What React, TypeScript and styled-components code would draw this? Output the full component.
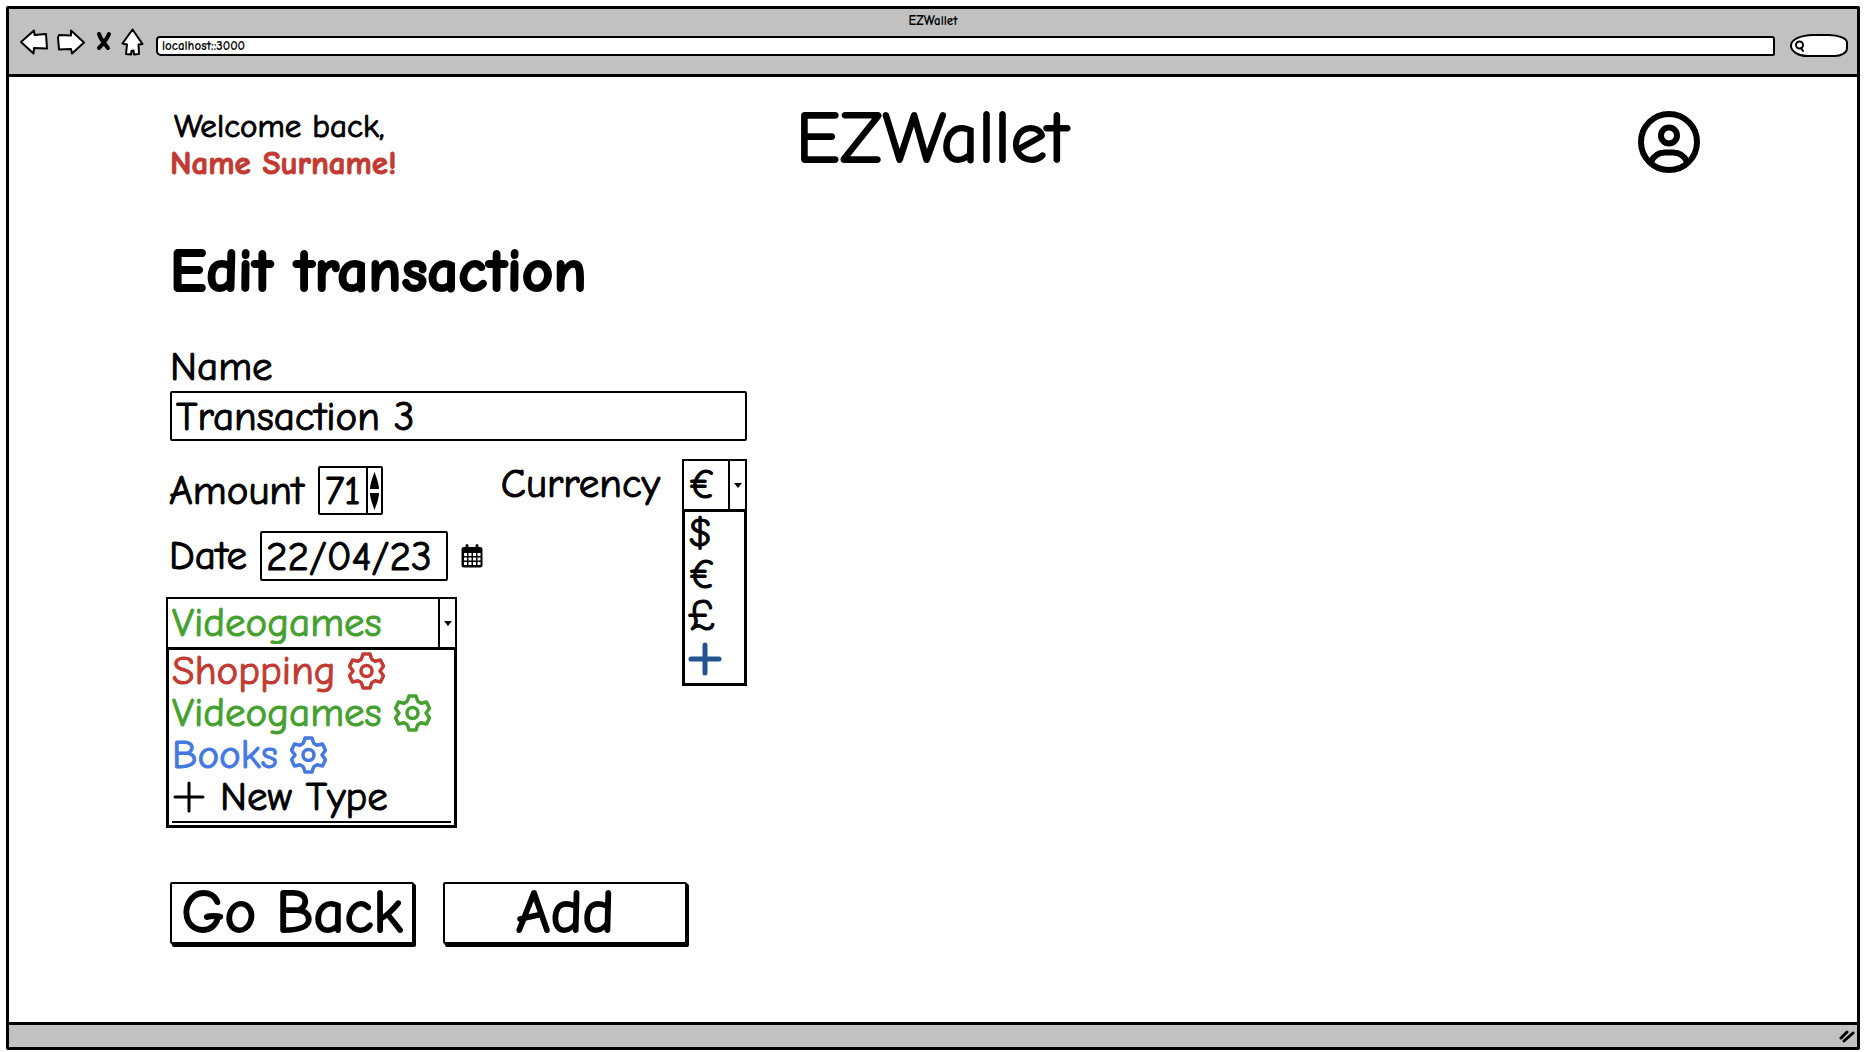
import React, { useState } from "react";
import styled, { createGlobalStyle, css } from "styled-components";

const INK = "#000";
const CHROME = "#c1c1c1";
const RED = "#c23b32";
const GREEN = "#45a030";
const BLUE = "#4479e0";
const NAVY = "#23528f";

const GlobalStyle = createGlobalStyle`
  *, *::before, *::after { box-sizing: border-box; }
  body {
    margin: 0;
    background: #fff;
    color: ${INK};
    font-family: "Comic Neue", Lato, "Open Sans", sans-serif;
  }
  button, input, select { font: inherit; color: inherit; }
`;

const bareControl = css`
  margin: 0;
  padding: 0;
  border: 0;
  background: transparent;
  appearance: none;
  outline: none;
`;

const bodyText = css`
  font-size: 41px;
  line-height: 42px;
  -webkit-text-stroke: 1px currentColor;
`;

const Page = styled.div`
  display: flex;
  min-height: 100vh;
  padding: 6px 4px 2px 6px;
`;

const BrowserFrame = styled.div`
  flex: 1;
  display: flex;
  flex-direction: column;
  border: 3px solid ${INK};
  border-radius: 2px;
`;

const Toolbar = styled.header`
  background: ${CHROME};
  border-bottom: 3px solid ${INK};
  padding-bottom: 18px;
`;

const WindowTitle = styled.div`
  text-align: center;
  font-size: 13px;
  line-height: 23px;
  font-weight: 700;
`;

const NavRow = styled.div`
  display: flex;
  align-items: center;
  height: 24px;
  padding: 0 9px 0 11px;
`;

const NavButtons = styled.nav`
  display: flex;
  align-items: center;
  gap: 9px;
  margin: -4px 12px 0 0;
`;

const IconButton = styled.button`
  ${bareControl}
  display: flex;
  cursor: pointer;
`;

const Address = styled.input`
  ${bareControl}
  flex: 1;
  min-width: 0;
  height: 20px;
  margin-top: 3px;
  padding: 0 4px;
  border: 2px solid ${INK};
  border-radius: 4px 3px 2px 5px;
  background: #fff;
  font-size: 13px;
  font-weight: 700;
`;

const SearchBox = styled.label`
  display: flex;
  align-items: center;
  width: 58px;
  height: 23px;
  margin: 3px 0 0 15px;
  padding-left: 2px;
  border: 2px solid ${INK};
  border-radius: 24px 20px 14px 18px / 12px 9px 9px 12px;
  background: #fff;
`;

const SearchInput = styled.input`
  ${bareControl}
  flex: 1;
  min-width: 0;
  font-size: 13px;
`;

const Main = styled.main`
  flex: 1;
  padding: 31px 157px 70px 161px;
`;

const PageHeader = styled.div`
  display: grid;
  grid-template-columns: 1fr auto 1fr;
  align-items: start;
`;

const Greeting = styled.p`
  margin: 0;
  font-size: 33px;
  line-height: 37px;
  -webkit-text-stroke: 1px currentColor;
`;

const Welcome = styled.span`
  display: block;
  padding-left: 4px;
`;

const UserName = styled.strong`
  display: block;
  color: ${RED};
`;

const Brand = styled.div`
  padding-right: 6px;
  font-size: 73px;
  line-height: 60px;
  -webkit-text-stroke: 2px currentColor;
`;

const ProfileButton = styled(IconButton)`
  justify-self: end;
  margin-top: 3px;
`;

const Heading = styled.h1`
  margin: 57px 0 0;
  font-size: 61px;
  line-height: 64px;
  font-weight: 700;
  -webkit-text-stroke: 2px currentColor;
`;

const Form = styled.form`
  max-width: 577px;
  margin-top: 43px;
`;

const Label = styled.label`
  ${bodyText}
`;

const NameField = styled.div`
  display: flex;
  flex-direction: column;
  gap: 3px;
`;

const TextInput = styled.input<{ $width?: string }>`
  ${bareControl}
  ${bodyText}
  width: ${(p) => p.$width ?? "100%"};
  height: 50px;
  padding: 0 4px;
  border: 2px solid ${INK};
  border-radius: 2px;
`;

const Columns = styled.div`
  display: flex;
  justify-content: space-between;
  align-items: flex-start;
  margin-top: 18px;
`;

const Stack = styled.div`
  display: flex;
  flex-direction: column;
  gap: 16px;
  padding-top: 7px;
  margin-left: -4px;
`;

const FieldRow = styled.div<{ $gap: number }>`
  display: flex;
  align-items: center;
  gap: ${(p) => p.$gap}px;
  padding-left: 3px;
`;

const CurrencyField = styled.div`
  display: flex;
  align-items: flex-start;
  gap: 22px;

  > label { line-height: 50px; }
`;

const Stepper = styled.div`
  display: flex;
  width: 65px;
  height: 49px;
  border: 2px solid ${INK};
  border-radius: 2px;
`;

const StepInput = styled.input`
  ${bareControl}
  ${bodyText}
  flex: 1;
  min-width: 0;
  text-align: center;
  -moz-appearance: textfield;

  &::-webkit-inner-spin-button,
  &::-webkit-outer-spin-button { appearance: none; margin: 0; }
`;

const StepButtons = styled.div`
  display: flex;
  flex-direction: column;
  align-items: center;
  justify-content: center;
  gap: 4px;
  width: 15px;
  border-left: 2px solid ${INK};
`;

const Combo = styled.div<{ $width: number }>`
  width: ${(p) => p.$width}px;
`;

const ComboHead = styled.div<{ $color?: string }>`
  display: flex;
  height: 50px;
  border: 2px solid ${INK};
  border-bottom: 0;
  color: ${(p) => p.$color ?? INK};
`;

const ComboSelect = styled.select`
  ${bareControl}
  ${bodyText}
  flex: 1;
  min-width: 0;
  padding-left: 4px;
`;

const Arrow = styled.span`
  display: flex;
  align-items: center;
  justify-content: center;
  width: 17px;
  border-left: 2px solid ${INK};
`;

const Options = styled.ul`
  margin: 0;
  padding: 0 3px 3px;
  border: 3px solid ${INK};
  list-style: none;
`;

const Option = styled.li<{ $color?: string }>`
  ${bodyText}
  display: flex;
  align-items: center;
  gap: 12px;
  height: 42px;
  color: ${(p) => p.$color ?? INK};
`;

const OptionButton = styled.button`
  ${bareControl}
  display: flex;
  align-items: center;
  gap: 14px;
  text-align: left;
  -webkit-text-stroke: inherit;
  line-height: 42px;
  cursor: pointer;
`;

const ListEnd = styled.li`
  height: 5px;
  margin-bottom: -1px;
  border-bottom: 2px solid ${INK};
`;

const Actions = styled.div`
  display: flex;
  gap: 29px;
  margin-top: 54px;
`;

const ActionButton = styled.button`
  ${bareControl}
  width: 244px;
  height: 62px;
  border: 2px solid ${INK};
  border-radius: 2px;
  box-shadow: 1px 1px 0 ${INK}, 2px 2px 0 ${INK}, 2px 3px 0 ${INK};
  font-size: 60px;
  line-height: 54px;
  white-space: nowrap;
  -webkit-text-stroke: 2px currentColor;
  cursor: pointer;
`;

const StatusBar = styled.footer`
  display: flex;
  align-items: center;
  justify-content: flex-end;
  height: 25px;
  padding-right: 2px;
  border-top: 3px solid ${INK};
  background: ${CHROME};
`;

const outline = { fill: "#fff", stroke: INK, strokeWidth: 2, strokeLinejoin: "round" as const };

const BackIcon = () => (
  <svg width="28" height="26" viewBox="0 0 28 26">
    <path {...outline} d="M1 13 14 1.500l.5 4.500 11.500-1 1 14.500-13-.5-.5 5.500Z" />
  </svg>
);

const ForwardIcon = () => (
  <svg width="28" height="26" viewBox="0 0 28 26">
    <path {...outline} d="M27 13.500 15 24.500l-1-4.500-12 .5-1-12L2 6l12 .5L14 1.500Z" />
  </svg>
);

const StopIcon = () => (
  <svg width="18" height="22" viewBox="0 0 18 22">
    <path
      d="M5 3c2 6 5 9 9 14M15 3C13 8 9 13 5 17"
      fill="none"
      stroke={INK}
      strokeWidth="4"
      strokeLinecap="round"
    />
  </svg>
);

const HomeIcon = () => (
  <svg width="23" height="28" viewBox="0 0 23 28">
    <path {...outline} d="M11.500 1.500 21.500 16l-4 .5.5 9.500-5 .5-.5-4-2 .5-.5 3.500-5-.5 1-9.500-4.500-1Z" />
  </svg>
);

const SearchIcon = () => (
  <svg width="12" height="14" viewBox="0 0 12 14">
    <g fill="none" stroke={INK} strokeWidth="2" strokeLinecap="round">
      <circle cx="5.500" cy="6" r="3.500" />
      <path d="m7 9 2 3" />
    </g>
  </svg>
);

const ProfileIcon = () => (
  <svg width="62" height="62" viewBox="0 0 62 62" fill="none" stroke={INK} strokeWidth="6">
    <circle cx="31" cy="31" r="28" />
    <circle cx="31" cy="24.500" r="8" />
    <path d="M13 51c3-7 8-9.500 14-9.500h8c6 0 11 2.500 14 9.500" />
  </svg>
);

const Triangle = ({ up }: { up?: boolean }) => (
  <svg width="9" height="17" viewBox="0 0 9 17">
    <path d={up ? "M4.500 0C6 4 9 12 9 17H0C0 12 3 4 4.500 0Z" : "M0 0h9C9 5 6 13 4.500 17 3 13 0 5 0 0Z"} fill={INK} />
  </svg>
);

const Caret = () => (
  <svg width="8" height="5" viewBox="0 0 8 5">
    <path d="M0 0h8L4 5Z" fill={INK} />
  </svg>
);

const CalendarIcon = () => (
  <svg width="22" height="24" viewBox="0 0 22 24">
    <path
      fillRule="evenodd"
      fill={INK}
      d="M4.500 1.500a1.500 1.500 0 0 1 3 0V3h7V1.500a1.500 1.500 0 0 1 3 0V3H19a2.500 2.500 0 0 1 2.500 2.500v15.500a2.500 2.500 0 0 1-2.500 2.500H3A2.500 2.500 0 0 1 .5 21V5.500A2.500 2.500 0 0 1 3 3h1.500ZM3 9v3h3V9Zm4.500 0v3h3V9ZM12 9v3h3V9Zm4.500 0v3h3V9ZM3 13.500v3h3v-3Zm4.500 0v3h3v-3Zm4.500 0v3h3v-3Zm4.500 0v3h3v-3ZM3 18v3h3v-3Zm4.500 0v3h3v-3Zm4.500 0v3h3v-3Zm4.500 0v3h3v-3Z"
    />
  </svg>
);

const GearIcon = () => (
  <svg width="37" height="38" viewBox="0 0 37 38" fill="none" stroke="currentColor" strokeWidth="3.500" strokeLinejoin="round">
    <path d="M15 2h7q1.500 5 2 5.500l3 1.800 5.500-1.300 3 6.200-3.500 4.800 3.500 4.800-3 6.200-5.500-1.300-3 1.800q-.5.5-2 5.500h-7q-1.500-5-2-5.500l-3-1.800L4.500 30l-3-6.200L5 19l-3.500-4.800 3-6.200L10 9.300l3-1.800q.5-.5 2-5.500Z" />
    <circle cx="18.500" cy="19" r="5.500" />
  </svg>
);

const PlusIcon = ({ bold }: { bold?: boolean }) => (
  <svg width="34" height="34" viewBox="0 0 34 34">
    <path
      d="M17 3v28M3 17h28"
      stroke="currentColor"
      strokeWidth={bold ? 5 : 3}
      strokeLinecap="round"
    />
  </svg>
);

const ResizeGrip = () => (
  <svg width="16" height="14" viewBox="0 0 16 14">
    <path d="m2 9 6-6M5 12l9-8" stroke={INK} strokeWidth="3" strokeLinecap="round" />
  </svg>
);

const TYPES = [
  { name: "Shopping", color: RED },
  { name: "Videogames", color: GREEN },
  { name: "Books", color: BLUE },
];
const CURRENCIES = ["$", "€", "£"];

export default function App() {
  const [amount, setAmount] = useState(71);
  const [type, setType] = useState("Videogames");
  const [currency, setCurrency] = useState("€");
  const typeColor = TYPES.find((t) => t.name === type)?.color;

  return (
    <>
      <GlobalStyle />
      <Page>
        <BrowserFrame>
          <Toolbar>
            <WindowTitle>EZWallet</WindowTitle>
            <NavRow>
              <NavButtons>
                <IconButton aria-label="Back"><BackIcon /></IconButton>
                <IconButton aria-label="Forward"><ForwardIcon /></IconButton>
                <IconButton aria-label="Stop"><StopIcon /></IconButton>
                <IconButton aria-label="Home"><HomeIcon /></IconButton>
              </NavButtons>
              <Address aria-label="Address" defaultValue="localhost::3000" />
              <SearchBox>
                <SearchIcon />
                <SearchInput aria-label="Search" />
              </SearchBox>
            </NavRow>
          </Toolbar>

          <Main>
            <PageHeader>
              <Greeting>
                <Welcome>Welcome back,</Welcome>
                <UserName>Name Surname!</UserName>
              </Greeting>
              <Brand>EZWallet</Brand>
              <ProfileButton aria-label="Profile"><ProfileIcon /></ProfileButton>
            </PageHeader>

            <Heading>Edit transaction</Heading>

            <Form onSubmit={(e) => e.preventDefault()}>
              <NameField>
                <Label htmlFor="name">Name</Label>
                <TextInput id="name" defaultValue="Transaction 3" />
              </NameField>

              <Columns>
                <Stack>
                  <FieldRow $gap={14}>
                    <Label htmlFor="amount">Amount</Label>
                    <Stepper>
                      <StepInput
                        id="amount"
                        type="number"
                        value={amount}
                        onChange={(e) => setAmount(Number(e.target.value))}
                      />
                      <StepButtons>
                        <IconButton type="button" aria-label="Increase" onClick={() => setAmount(amount + 1)}>
                          <Triangle up />
                        </IconButton>
                        <IconButton type="button" aria-label="Decrease" onClick={() => setAmount(amount - 1)}>
                          <Triangle />
                        </IconButton>
                      </StepButtons>
                    </Stepper>
                  </FieldRow>

                  <FieldRow $gap={13}>
                    <Label htmlFor="date">Date</Label>
                    <TextInput id="date" $width="188px" defaultValue="22/04/23" />
                    <IconButton type="button" aria-label="Pick a date"><CalendarIcon /></IconButton>
                  </FieldRow>

                  <Combo $width={291}>
                    <ComboHead $color={typeColor}>
                      <ComboSelect aria-label="Type" value={type} onChange={(e) => setType(e.target.value)}>
                        {TYPES.map((t) => <option key={t.name}>{t.name}</option>)}
                      </ComboSelect>
                      <Arrow aria-hidden="true"><Caret /></Arrow>
                    </ComboHead>
                    <Options>
                      {TYPES.map((t) => (
                        <Option key={t.name} $color={t.color}>
                          <OptionButton type="button" onClick={() => setType(t.name)}>{t.name}</OptionButton>
                          <IconButton type="button" aria-label={`${t.name} settings`}><GearIcon /></IconButton>
                        </Option>
                      ))}
                      <Option>
                        <OptionButton type="button"><PlusIcon />New Type</OptionButton>
                      </Option>
                      <ListEnd aria-hidden="true" />
                    </Options>
                  </Combo>
                </Stack>

                <CurrencyField>
                  <Label htmlFor="currency">Currency</Label>
                  <Combo $width={65}>
                    <ComboHead>
                      <ComboSelect id="currency" value={currency} onChange={(e) => setCurrency(e.target.value)}>
                        {CURRENCIES.map((c) => <option key={c}>{c}</option>)}
                      </ComboSelect>
                      <Arrow aria-hidden="true"><Caret /></Arrow>
                    </ComboHead>
                    <Options>
                      {CURRENCIES.map((c) => (
                        <Option key={c}>
                          <OptionButton type="button" onClick={() => setCurrency(c)}>{c}</OptionButton>
                        </Option>
                      ))}
                      <Option $color={NAVY}>
                        <OptionButton type="button" aria-label="Add currency"><PlusIcon bold /></OptionButton>
                      </Option>
                    </Options>
                  </Combo>
                </CurrencyField>
              </Columns>

              <Actions>
                <ActionButton type="button">Go Back</ActionButton>
                <ActionButton type="submit">Add</ActionButton>
              </Actions>
            </Form>
          </Main>

          <StatusBar><ResizeGrip /></StatusBar>
        </BrowserFrame>
      </Page>
    </>
  );
}
